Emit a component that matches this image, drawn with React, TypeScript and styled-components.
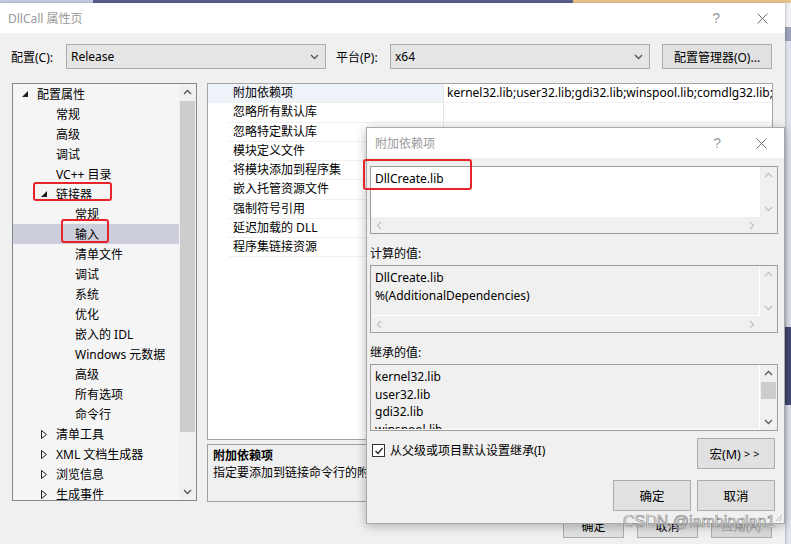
import React from "react";
import styled, { createGlobalStyle } from "styled-components";

const GlobalStyle = createGlobalStyle`
  html, body {
    margin: 0;
    padding: 0;
    background: #e4e7ef;
  }
  body {
    font-family: "Noto Sans", "Noto Sans CJK SC", sans-serif;
    font-size: 12px;
    color: #000;
  }
  * {
    box-sizing: border-box;
  }
`;

type Dir = "up" | "down" | "left" | "right";

const chevronPoints: Record<Dir, string> = {
  up: "1,6 4.5,2.5 8,6",
  down: "1,3 4.5,6.5 8,3",
  left: "6,1 2.5,4.5 6,8",
  right: "3,1 6.5,4.5 3,8",
};

const Chevron: React.FC<{ dir: Dir; color?: string }> = ({ dir, color = "#606060" }) => (
  <svg width="9" height="9" viewBox="0 0 9 9">
    <polyline points={chevronPoints[dir]} fill="none" stroke={color} strokeWidth="1.3" />
  </svg>
);

const CloseIcon = () => (
  <svg width="11" height="11" viewBox="0 0 11 11">
    <path d="M0.5 0.5 L10.5 10.5 M10.5 0.5 L0.5 10.5" stroke="#6d6d6d" strokeWidth="1" />
  </svg>
);

const OpenArrow = () => (
  <svg width="6" height="6" viewBox="0 0 6 6">
    <polygon points="6,0 6,6 0,6" fill="#1e1e1e" />
  </svg>
);

const ClosedArrow = () => (
  <svg width="6" height="9" viewBox="0 0 6 9">
    <polygon points="0.5,0.5 5.5,4.5 0.5,8.5" fill="none" stroke="#1e1e1e" strokeWidth="1" />
  </svg>
);

const CheckMark = () => (
  <svg width="10" height="10" viewBox="0 0 10 10">
    <polyline points="1.5,5 4,7.5 8.5,2" fill="none" stroke="#222" strokeWidth="1.3" />
  </svg>
);

interface TreeItem {
  level: number;
  text: string;
  arrow?: "open" | "closed";
  selected?: boolean;
  mark?: { l: number; t: number; w: number; h: number };
}

const treeItems: TreeItem[] = [
  { level: 0, text: "配置属性", arrow: "open" },
  { level: 1, text: "常规" },
  { level: 1, text: "高级" },
  { level: 1, text: "调试" },
  { level: 1, text: "VC++ 目录" },
  { level: 1, text: "链接器", arrow: "open", mark: { l: 20, t: -2, w: 79, h: 19 } },
  { level: 2, text: "常规" },
  { level: 2, text: "输入", selected: true, mark: { l: 48, t: -5, w: 48, h: 24 } },
  { level: 2, text: "清单文件" },
  { level: 2, text: "调试" },
  { level: 2, text: "系统" },
  { level: 2, text: "优化" },
  { level: 2, text: "嵌入的 IDL" },
  { level: 2, text: "Windows 元数据" },
  { level: 2, text: "高级" },
  { level: 2, text: "所有选项" },
  { level: 2, text: "命令行" },
  { level: 1, text: "清单工具", arrow: "closed" },
  { level: 1, text: "XML 文档生成器", arrow: "closed" },
  { level: 1, text: "浏览信息", arrow: "closed" },
  { level: 1, text: "生成事件", arrow: "closed" },
];

const properties = [
  "附加依赖项",
  "忽略所有默认库",
  "忽略特定默认库",
  "模块定义文件",
  "将模块添加到程序集",
  "嵌入托管资源文件",
  "强制符号引用",
  "延迟加载的 DLL",
  "程序集链接资源",
];

interface BoxProps {
  lines: string[];
  white?: boolean;
  hbar?: boolean;
  active?: boolean;
  height: number;
}

const ScrollBox: React.FC<BoxProps> = ({ lines, white, hbar, active, height }) => {
  const arrowColor = active ? "#5a5a5a" : "#c2c2c2";
  return (
    <BoxFrame $h={height} $hbar={!!hbar}>
      <BoxText $white={!!white}>
        {lines.map((l) => (
          <div key={l}>{l}</div>
        ))}
      </BoxText>
      <VBar>
        <BarArrow>
          <Chevron dir="up" color={arrowColor} />
        </BarArrow>
        {active && <BoxThumb />}
        <Track />
        <BarArrow>
          <Chevron dir="down" color={arrowColor} />
        </BarArrow>
      </VBar>
      {hbar && (
        <>
          <HBar>
            <HArrow>
              <Chevron dir="left" color={arrowColor} />
            </HArrow>
            <HArrow>
              <Chevron dir="right" color={arrowColor} />
            </HArrow>
          </HBar>
          <Corner />
        </>
      )}
    </BoxFrame>
  );
};

const App: React.FC = () => {
  return (
    <Desktop>
      <GlobalStyle />
      <BackStrip>
        <StripPart $w={93} $c="#c6c9dd" />
        <StripPart $w={480} $c="#585e89" />
        <StripPart $w={218} $c="#e5c18b" />
      </BackStrip>
      <Screen>
        <MainWindow>
          <TitleBar>
            <TitleText>DllCall 属性页</TitleText>
            <HelpMark>?</HelpMark>
            <CloseIcon />
          </TitleBar>
          <Toolbar>
            <FieldLabel $w={55}>配置(C):</FieldLabel>
            <Combo $w={260} $mr={10}>
              <span>Release</span>
              <Chevron dir="down" color="#555" />
            </Combo>
            <FieldLabel $w={54}>平台(P):</FieldLabel>
            <Combo $w={260} $mr={12}>
              <span>x64</span>
              <Chevron dir="down" color="#555" />
            </Combo>
            <ToolButton>配置管理器(O)...</ToolButton>
          </Toolbar>
          <Body>
            <Tree>
              <TreeList>
                {treeItems.map((item, i) => (
                  <TreeRow key={i} $level={item.level} $selected={!!item.selected}>
                    <ArrowSlot>
                      {item.arrow === "open" && <OpenArrow />}
                      {item.arrow === "closed" && <ClosedArrow />}
                    </ArrowSlot>
                    <span>{item.text}</span>
                    {item.mark && (
                      <Mark
                        style={{
                          left: item.mark.l,
                          top: item.mark.t,
                          width: item.mark.w,
                          height: item.mark.h,
                        }}
                      />
                    )}
                  </TreeRow>
                ))}
              </TreeList>
              <TreeScroll>
                <TreeArrow>
                  <Chevron dir="up" color="#505050" />
                </TreeArrow>
                <TreeThumb />
                <Track />
                <TreeArrow>
                  <Chevron dir="down" color="#505050" />
                </TreeArrow>
              </TreeScroll>
            </Tree>
            <RightColumn>
              <PropGrid>
                {properties.map((name, i) => (
                  <PropRow key={name} $active={i === 0}>
                    <Gutter />
                    <PropName>{name}</PropName>
                    <PropValue>
                      {i === 0 ? "kernel32.lib;user32.lib;gdi32.lib;winspool.lib;comdlg32.lib;advapi32.lib" : ""}
                    </PropValue>
                  </PropRow>
                ))}
              </PropGrid>
              <Description>
                <DescTitle>附加依赖项</DescTitle>
                <div>指定要添加到链接命令行的附加依赖项。</div>
              </Description>
            </RightColumn>
          </Body>
          <Footer>
            <FooterButton>确定</FooterButton>
            <FooterButton>取消</FooterButton>
            <FooterButton $disabled>应用(A)</FooterButton>
          </Footer>
        </MainWindow>
        <SideApp>
          <SideBand $h={24} $c="#eef0f5" />
          <SideBand $h={14} $c="#9aa0b8" />
          <SideBand $h={286} $c="#dfe3ed" />
          <SideBand $h={78} $c="#434a74" />
          <SideBand $h={139} $c="#e2e5ee" />
        </SideApp>
      </Screen>

      <Dialog>
        <TitleBar>
          <TitleText>附加依赖项</TitleText>
          <HelpMark $gap={35}>?</HelpMark>
          <CloseIcon />
        </TitleBar>
        <DialogBody>
          <ScrollBox lines={["DllCreate.lib"]} white hbar height={68} />
          <SectionLabel>计算的值:</SectionLabel>
          <ScrollBox lines={["DllCreate.lib", "%(AdditionalDependencies)"]} hbar height={68} />
          <SectionLabel>继承的值:</SectionLabel>
          <ScrollBox
            lines={["kernel32.lib", "user32.lib", "gdi32.lib", "winspool.lib", "comdlg32.lib"]}
            active
            height={67}
          />
          <OptionRow>
            <CheckLabel>
              <CheckBox>
                <CheckMark />
              </CheckBox>
              从父级或项目默认设置继承(I)
            </CheckLabel>
            <DialogButton>
              宏(M)&nbsp;<Spaced>&gt;&gt;</Spaced>
            </DialogButton>
          </OptionRow>
          <ButtonRow>
            <DialogButton>确定</DialogButton>
            <DialogButton>取消</DialogButton>
          </ButtonRow>
          <Mark style={{ left: -4, top: 1, width: 109, height: 31 }} />
          <Grip>
            <svg width="9" height="9" viewBox="0 0 9 9">
              <path d="M8 2 L2 8 M8 5 L5 8" stroke="#b5b5b5" strokeWidth="1" />
            </svg>
          </Grip>
        </DialogBody>
      </Dialog>

      <Watermark>CSDN @iambinglan1</Watermark>
    </Desktop>
  );
};

export default App;

const Desktop = styled.div`
  position: relative;
  width: 791px;
  height: 544px;
  overflow: hidden;
  display: flex;
  flex-direction: column;
`;

const BackStrip = styled.div`
  height: 3px;
  display: flex;
  flex-shrink: 0;
`;

const StripPart = styled.div<{ $w: number; $c: string }>`
  width: ${(p) => p.$w}px;
  background: ${(p) => p.$c};
`;

const Screen = styled.div`
  flex: 1;
  display: flex;
  min-height: 0;
`;

const MainWindow = styled.div`
  width: 785px;
  flex-shrink: 0;
  background: #f0f0f0;
  display: flex;
  flex-direction: column;
  box-shadow: 1px 0 2px rgba(0, 0, 0, 0.2);
  z-index: 1;
`;

const SideApp = styled.div`
  flex: 1;
  display: flex;
  flex-direction: column;
`;

const SideBand = styled.div<{ $h: number; $c: string }>`
  height: ${(p) => p.$h}px;
  background: ${(p) => p.$c};
  flex-shrink: 0;
`;

const TitleBar = styled.div`
  height: 30px;
  flex-shrink: 0;
  background: #fff;
  display: flex;
  align-items: center;
  padding: 0 17px 0 8px;
`;

const TitleText = styled.div`
  flex: 1;
  color: #9a9a9a;
  font-size: 12px;
`;

const HelpMark = styled.span<{ $gap?: number }>`
  color: #9a9a9a;
  font-family: "Liberation Sans", sans-serif;
  font-size: 14px;
  margin-right: ${(p) => p.$gap ?? 37}px;
`;

const Toolbar = styled.div`
  height: 47px;
  flex-shrink: 0;
  display: flex;
  align-items: center;
  padding: 0 13px 0 11px;
`;

const FieldLabel = styled.label<{ $w: number }>`
  width: ${(p) => p.$w}px;
  flex-shrink: 0;
`;

const Combo = styled.div<{ $w: number; $mr: number }>`
  width: ${(p) => p.$w}px;
  margin-right: ${(p) => p.$mr}px;
  height: 25px;
  flex-shrink: 0;
  border: 1px solid #acacac;
  background: #e5e5e5;
  display: flex;
  align-items: center;
  justify-content: space-between;
  padding: 0 6px 0 4px;
`;

const ToolButton = styled.div`
  width: 110px;
  height: 25px;
  border: 1px solid #adadad;
  background: #e1e1e1;
  display: flex;
  align-items: center;
  justify-content: center;
`;

const Body = styled.div`
  height: 422px;
  flex-shrink: 0;
  display: flex;
  gap: 10px;
  padding: 3px 12px 0 12px;
`;

const Tree = styled.div`
  width: 185px;
  height: 418px;
  border: 1px solid #828790;
  background: #f5f5f5;
  display: flex;
`;

const TreeList = styled.div`
  flex: 1;
  overflow: hidden;
`;

const TreeRow = styled.div<{ $level: number; $selected: boolean }>`
  position: relative;
  height: 20px;
  display: flex;
  align-items: center;
  white-space: nowrap;
  padding-left: ${(p) => 9 + p.$level * 19}px;
  background: ${(p) => (p.$selected ? "#cccedb" : "transparent")};
`;

const ArrowSlot = styled.span`
  width: 15px;
  flex-shrink: 0;
  display: flex;
  align-items: center;
`;

const Mark = styled.span`
  position: absolute;
  border: 2px solid #e8232a;
  border-radius: 3px;
  pointer-events: none;
`;

const TreeScroll = styled.div`
  width: 17px;
  display: flex;
  flex-direction: column;
  background: #f0f0f0;
`;

const TreeArrow = styled.div`
  height: 17px;
  display: flex;
  align-items: center;
  justify-content: center;
`;

const TreeThumb = styled.div`
  height: 331px;
  margin: 0 1px;
  background: #cdcdcd;
`;

const Track = styled.div`
  flex: 1;
`;

const RightColumn = styled.div`
  flex: 1;
  display: flex;
  flex-direction: column;
  gap: 4px;
`;

const PropGrid = styled.div`
  height: 357px;
  flex-shrink: 0;
  border: 1px solid #a5a5a5;
  background: #fff;
  overflow: hidden;
`;

const PropRow = styled.div<{ $active: boolean }>`
  display: grid;
  grid-template-columns: 21px 214px 1fr;
  height: 19.25px;
  line-height: 18px;
  background: ${(p) => (p.$active ? "#eef2f9" : "#fff")};
`;

const Gutter = styled.div``;

const PropName = styled.div`
  padding-left: 4px;
  border-bottom: 1px solid #f0f0f0;
  white-space: nowrap;
  overflow: hidden;
`;

const PropValue = styled.div`
  padding-left: 3px;
  border-left: 1px solid #e6e6e6;
  border-bottom: 1px solid #f0f0f0;
  background: #fff;
  white-space: nowrap;
  overflow: hidden;
`;

const Description = styled.div`
  height: 58px;
  flex-shrink: 0;
  border: 1px solid #a0a0a0;
  background: #f0f0f0;
  padding: 2px 5px;
  line-height: 17px;
  white-space: nowrap;
  overflow: hidden;
`;

const DescTitle = styled.div`
  font-weight: bold;
`;

const Footer = styled.div`
  display: flex;
  justify-content: flex-end;
  gap: 13px;
  padding: 12px 13px 0 0;
`;

const FooterButton = styled.div<{ $disabled?: boolean }>`
  width: 61px;
  height: 24px;
  border: 1px solid #adadad;
  background: ${(p) => (p.$disabled ? "#d9d9d9" : "#e1e1e1")};
  color: ${(p) => (p.$disabled ? "#a0a0a0" : "#000")};
  display: flex;
  align-items: center;
  justify-content: center;
`;

const Dialog = styled.div`
  position: absolute;
  left: 366px;
  top: 127px;
  width: 419px;
  height: 397px;
  background: #f0f0f0;
  border: 1px solid #a9a9a9;
  box-shadow: 0 2px 10px rgba(0, 0, 0, 0.28);
  display: flex;
  flex-direction: column;
  z-index: 2;
`;

const DialogBody = styled.div`
  position: relative;
  flex: 1;
  display: flex;
  flex-direction: column;
  padding: 8px 6px 0 3px;
`;

const BoxFrame = styled.div<{ $h: number; $hbar: boolean }>`
  height: ${(p) => p.$h}px;
  flex-shrink: 0;
  border: 1px solid #9d9d9d;
  background: #f0f0f0;
  display: grid;
  grid-template-columns: 1fr 17px;
  grid-template-rows: ${(p) => (p.$hbar ? "1fr 16px" : "1fr")};
  overflow: hidden;
`;

const BoxText = styled.div<{ $white: boolean }>`
  background: ${(p) => (p.$white ? "#fff" : "#f0f0f0")};
  border-right: 1px solid #fff;
  border-bottom: 1px solid #fff;
  padding: 3px 4px;
  line-height: 17.5px;
  overflow: hidden;
  white-space: nowrap;
`;

const VBar = styled.div`
  display: flex;
  flex-direction: column;
  min-height: 0;
`;

const BarArrow = styled.div`
  height: 17px;
  flex-shrink: 0;
  display: flex;
  align-items: center;
  justify-content: center;
`;

const BoxThumb = styled.div`
  height: 17px;
  flex-shrink: 0;
  margin: 0 1px;
  background: #cdcdcd;
`;

const HBar = styled.div`
  display: flex;
  justify-content: space-between;
`;

const HArrow = styled.div`
  width: 17px;
  display: flex;
  align-items: center;
  justify-content: center;
`;

const Corner = styled.div`
  background: #f0f0f0;
`;

const SectionLabel = styled.div`
  margin: 11px 0 3px;
  line-height: 17px;
`;

const OptionRow = styled.div`
  display: flex;
  justify-content: space-between;
  align-items: flex-start;
  margin-top: 7px;
  padding-right: 3px;
`;

const CheckLabel = styled.div`
  display: flex;
  align-items: center;
  gap: 5px;
  margin: 4px 0 0 2px;
  line-height: 17px;
`;

const CheckBox = styled.span`
  width: 13px;
  height: 13px;
  border: 1px solid #333;
  background: #fff;
  display: flex;
  align-items: center;
  justify-content: center;
`;

const ButtonRow = styled.div`
  display: flex;
  justify-content: flex-end;
  gap: 6px;
  margin-top: 11px;
  padding-right: 3px;
`;

const DialogButton = styled.div`
  width: 78px;
  height: 31px;
  border: 1px solid #adadad;
  background: #e1e1e1;
  display: flex;
  align-items: center;
  justify-content: center;
  font-size: 12.5px;
`;

const Spaced = styled.span`
  letter-spacing: 3px;
  font-size: 11px;
`;

const Grip = styled.div`
  position: absolute;
  right: 1px;
  bottom: 1px;
  line-height: 0;
`;

const Watermark = styled.div`
  position: absolute;
  left: 623px;
  top: 513px;
  z-index: 3;
  font-family: "Liberation Sans", sans-serif;
  font-size: 16px;
  color: rgba(255, 255, 255, 0.8);
  -webkit-text-stroke: 0.7px #8c8c8c;
  white-space: nowrap;
`;
